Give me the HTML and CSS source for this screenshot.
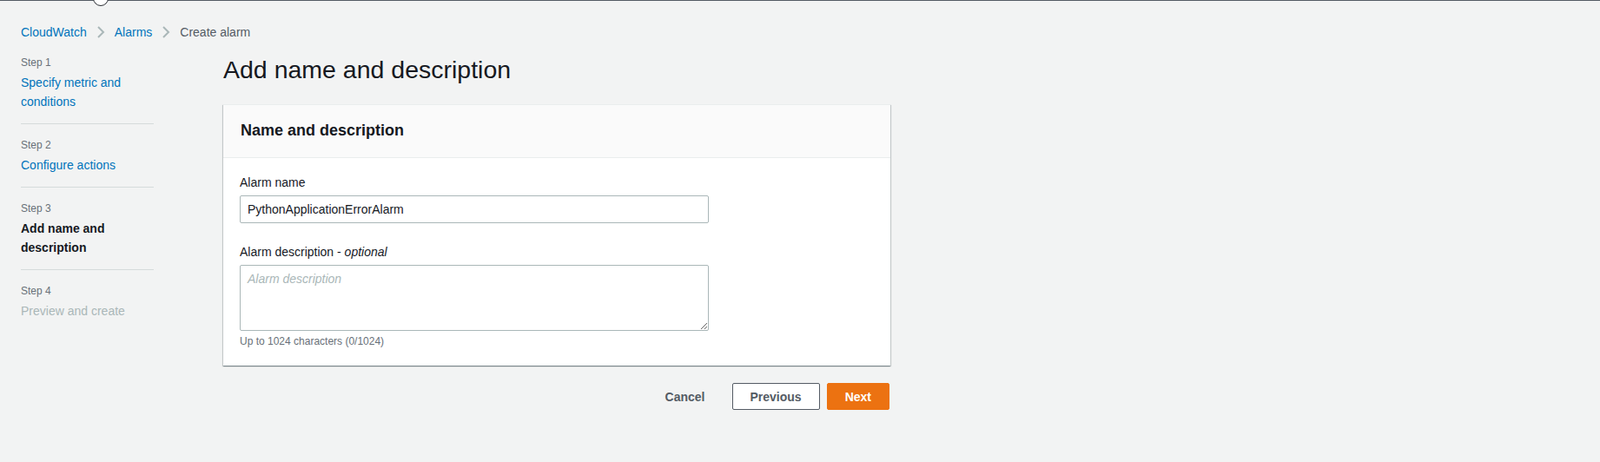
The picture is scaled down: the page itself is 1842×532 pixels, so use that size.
FILE: index.html
```html
<!DOCTYPE html>
<html lang="en">
<head>
<meta charset="utf-8">
<title>Create alarm</title>
<link rel="stylesheet" href="styles.css">
</head>
<body>
<div class="topline"></div>
<div class="handle"></div>
<nav class="breadcrumbs">
  <a class="crumb" href="#">CloudWatch</a>
  <svg class="chev" width="16" height="16" viewBox="0 0 16 16"><polyline points="5,2 11,8 5,14" fill="none" stroke="#aab7b8" stroke-width="2"/></svg>
  <a class="crumb" href="#">Alarms</a>
  <svg class="chev" width="16" height="16" viewBox="0 0 16 16"><polyline points="5,2 11,8 5,14" fill="none" stroke="#aab7b8" stroke-width="2"/></svg>
  <span class="crumb current">Create alarm</span>
</nav>
<div class="layout">
  <ul class="steps">
    <li class="step"><div class="step-label">Step 1</div><a class="step-title link" href="#">Specify metric and conditions</a></li>
    <li class="step"><div class="step-label">Step 2</div><a class="step-title link" href="#">Configure actions</a></li>
    <li class="step"><div class="step-label">Step 3</div><span class="step-title active">Add name and description</span></li>
    <li class="step last"><div class="step-label">Step 4</div><span class="step-title disabled">Preview and create</span></li>
  </ul>
  <main class="main">
    <h1 class="title">Add name and description</h1>
    <section class="card">
      <div class="card-header"><h2>Name and description</h2></div>
      <div class="card-body">
        <div class="field">
          <label class="label">Alarm name</label>
          <input class="input" type="text" value="PythonApplicationErrorAlarm">
        </div>
        <div class="field">
          <label class="label">Alarm description - <i>optional</i></label>
          <textarea class="textarea" placeholder="Alarm description"></textarea>
          <div class="hint">Up to 1024 characters (0/1024)</div>
        </div>
      </div>
    </section>
    <div class="actions">
      <button class="btn btn-link">Cancel</button>
      <button class="btn btn-normal">Previous</button>
      <button class="btn btn-primary">Next</button>
    </div>
  </main>
</div>
</body>
</html>
```
FILE: styles.css
```css
* { box-sizing: border-box; }
html, body { margin: 0; padding: 0; }
body {
  background: #f2f3f3;
  font-family: "Liberation Sans", Arial, sans-serif;
  font-size: 14px;
  line-height: 22px;
  color: #16191f;
  position: relative;
  min-height: 532px;
}
.topline { height: 1px; background: #545b64; }
.handle {
  position: absolute;
  left: 107px;
  top: -11px;
  width: 18px;
  height: 18px;
  border-radius: 50%;
  background: #fff;
  border: 1px solid #2a2e33;
}
.breadcrumbs {
  display: flex;
  align-items: center;
  padding: 25px 0 0 24px;
  height: 47px;
  line-height: 20px;
}
.crumb { color: #0073bb; text-decoration: none; }
.crumb.current { color: #545b64; }
.chev { margin: 0 8px; display: block; }
.layout {
  display: grid;
  grid-template-columns: 153px 768px;
  column-gap: 80px;
  padding-left: 24px;
}
.steps { list-style: none; margin: 0; padding: 0; }
.step {
  padding: 16px 0 14px;
  border-bottom: 1px solid #d5dbdb;
}
.step.last { border-bottom: none; }
.step-label {
  font-size: 12px;
  line-height: 16px;
  color: #687078;
  margin-bottom: 4px;
}
.step-title { display: block; text-decoration: none; }
.step-title.link { color: #0073bb; }
.step-title.active { font-weight: bold; color: #16191f; }
.step-title.disabled { color: #aab7b8; }
.main { padding-top: 14px; }
.title {
  margin: 0;
  font-size: 28.5px;
  line-height: 36px;
  font-weight: normal;
  color: #16191f;
}
.card {
  margin-top: 22px;
  background: #fff;
  border-top: 1px solid #eaeded;
  box-shadow: 0 1px 1px 0 rgba(0,28,36,.3), 1px 1px 1px 0 rgba(0,28,36,.15), -1px 1px 1px 0 rgba(0,28,36,.15);
}
.card-header {
  background: #fafafa;
  border-bottom: 1px solid #eaeded;
  padding: 18px 20px 20px;
}
.card-header h2 {
  margin: 0;
  font-size: 18px;
  line-height: 22px;
  font-weight: bold;
}
.card-body { padding: 17px 20px 20px 19px; }
.field + .field { margin-top: 22px; }
.label { display: block; margin-bottom: 4px; color: #16191f; }
.input, .textarea {
  display: block;
  width: 540px;
  border: 1px solid #aab7b8;
  border-radius: 2px;
  background: #fff;
  font-family: inherit;
  font-size: 14px;
  color: #16191f;
}
.input { height: 32px; padding: 4px 8px; }
.textarea { height: 76px; padding: 4px 8px; resize: vertical; line-height: 22px; }
.textarea::placeholder { color: #aab7b8; font-style: italic; }
.hint {
  margin-top: 4px;
  font-size: 12px;
  line-height: 16px;
  color: #687078;
}
.actions {
  display: flex;
  justify-content: flex-end;
  align-items: center;
  gap: 8px;
  margin-top: 20px;
  padding-right: 1px;
}
.btn {
  font-family: inherit;
  font-size: 14px;
  font-weight: bold;
  line-height: 22px;
  padding: 4px 20px;
  border-radius: 2px;
  border: 1px solid transparent;
  height: 31px;
}
.btn-link { background: transparent; color: #545b64; margin-right: 2px; }
.btn-normal { background: #fff; color: #545b64; border-color: #545b64; }
.btn-primary { background: #ec7211; color: #fff; border-color: #ec7211; }
```
